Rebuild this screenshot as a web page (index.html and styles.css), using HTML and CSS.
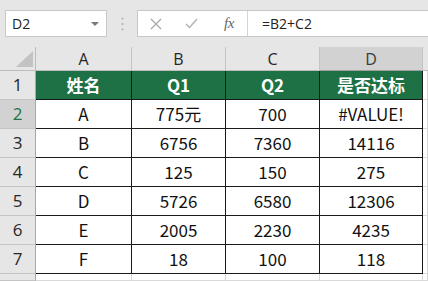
FILE: index.html
```html
<!DOCTYPE html>
<html>
<head>
<meta charset="utf-8">
<link rel="stylesheet" href="styles.css">
</head>
<body>
<div class="toolbar">
  <div class="namebox">
    <span class="name">D2</span>
    <svg class="drop" width="8" height="5" viewBox="0 0 8 5"><path d="M0 0 L8 0 L4 4 Z" fill="#7a7a7a"/></svg>
  </div>
  <div class="sep">
    <svg width="3" height="14" viewBox="0 0 3 14"><circle cx="1.5" cy="1.5" r="1.1" fill="#b0b0b0"/><circle cx="1.5" cy="7" r="1.1" fill="#b0b0b0"/><circle cx="1.5" cy="12.5" r="1.1" fill="#b0b0b0"/></svg>
  </div>
  <div class="fbar">
    <div class="ficons">
      <svg class="ic-x" width="12" height="12" viewBox="0 0 12 12"><path d="M1 1 L11 11 M11 1 L1 11" stroke="#a8a8a8" stroke-width="1.3" fill="none"/></svg>
      <svg class="ic-ok" width="13" height="11" viewBox="0 0 13 11"><path d="M1 6 L4.5 9.5 L12 1" stroke="#b4b4b4" stroke-width="1.5" fill="none"/></svg>
      <span class="fx">fx</span>
    </div>
    <div class="ftext">=B2+C2</div>
  </div>
</div>
<div class="sheet">
  <div class="corner"><svg width="17" height="16" viewBox="0 0 17 16"><path d="M17 0 L17 16 L0 16 Z" fill="#c3c3c3"/></svg></div>
  <div class="ch">A</div><div class="ch">B</div><div class="ch">C</div><div class="ch sel">D</div><div class="ch last"></div>

  <div class="rh">1</div>
  <div class="c hd">姓名</div><div class="c hd">Q1</div><div class="c hd">Q2</div><div class="c hd">是否达标</div><div class="e"></div>

  <div class="rh sel">2</div>
  <div class="c">A</div><div class="c">775元</div><div class="c">700</div><div class="c">#VALUE!</div><div class="e"></div>

  <div class="rh">3</div>
  <div class="c">B</div><div class="c">6756</div><div class="c">7360</div><div class="c">14116</div><div class="e"></div>

  <div class="rh">4</div>
  <div class="c">C</div><div class="c">125</div><div class="c">150</div><div class="c">275</div><div class="e"></div>

  <div class="rh">5</div>
  <div class="c">D</div><div class="c">5726</div><div class="c">6580</div><div class="c">12306</div><div class="e"></div>

  <div class="rh">6</div>
  <div class="c">E</div><div class="c">2005</div><div class="c">2230</div><div class="c">4235</div><div class="e"></div>

  <div class="rh">7</div>
  <div class="c">F</div><div class="c">18</div><div class="c">100</div><div class="c">118</div><div class="e"></div>

  <div class="rh"></div>
  <div class="e"></div><div class="e"></div><div class="e"></div><div class="e"></div><div class="e"></div>
</div>
</body>
</html>
```

FILE: styles.css
```css
* { box-sizing: border-box; }
html, body {
  margin: 0;
  padding: 0;
  width: 428px;
  height: 281px;
  overflow: hidden;
  background: #e6e6e6;
  font-family: "Noto Sans CJK SC", "Noto Sans", sans-serif;
  color: #1a1a1a;
}
.toolbar {
  height: 47px;
  display: flex;
  align-items: flex-start;
  padding-top: 10px;
}
.namebox {
  margin-left: 5px;
  width: 102px;
  height: 27px;
  background: #fff;
  border: 1px solid #c8c8c8;
  display: flex;
  align-items: center;
  justify-content: space-between;
  padding: 0 7px 0 6px;
}
.name {
  font-size: 14px;
  color: #222;
  font-family: "Open Sans", "Noto Sans", sans-serif;
}
.drop { margin-top: 1px; }
.sep {
  width: 30px;
  height: 27px;
  display: flex;
  align-items: center;
  justify-content: center;
}
.fbar {
  flex: 1;
  height: 27px;
  background: #fff;
  border: 1px solid #c8c8c8;
  border-right: none;
  display: flex;
}
.ficons {
  width: 110px;
  display: flex;
  align-items: center;
  padding-left: 12px;
  border-right: 1px solid #d4d4d4;
}
.ic-x { margin-right: 23px; }
.ic-ok { margin-right: 26px; }
.fx {
  font-family: "Liberation Serif", serif;
  font-style: italic;
  font-size: 15px;
  color: #666;
  letter-spacing: -0.5px;
}
.ftext {
  padding-left: 14px;
  font-size: 14px;
  line-height: 25px;
  color: #222;
  font-family: "Open Sans", "Noto Sans", sans-serif;
}
.sheet {
  display: grid;
  grid-template-columns: 36px 96px 94px 94px 103px 1fr;
  grid-template-rows: 24px repeat(7, 29px) 7px;
  background: #fff;
}
.corner {
  background: #e6e6e6;
  border-right: 1px solid #bdbdbd;
  border-bottom: 1px solid #bdbdbd;
  display: flex;
  align-items: flex-end;
  justify-content: flex-end;
  padding: 0 2px 3px 0;
}
.ch {
  background: #e6e6e6;
  border-right: 1px solid #c4c4c4;
  border-bottom: 1px solid #bdbdbd;
  font-size: 16px;
  line-height: 24px;
  text-align: center;
  color: #262626;
  font-family: "Open Sans", "Noto Sans", sans-serif;
}
.ch.sel { background: #d2d2d2; color: #3a3a3a; border-bottom: 1px solid #a0a0a0; }
.ch.last { border-right: none; }
.rh {
  background: #e6e6e6;
  border-right: 1px solid #a8a8a8;
  border-bottom: 1px solid #c4c4c4;
  font-size: 17px;
  line-height: 28px;
  text-align: center;
  color: #262626;
  font-family: "Open Sans", "Noto Sans", sans-serif;
}
.rh.sel { background: #d2d2d2; color: #217346; }
.c {
  border-right: 1px solid #1a1a1a;
  border-bottom: 1px solid #1a1a1a;
  font-size: 17px;
  line-height: 28px;
  text-align: center;
  color: #111;
}
.c.hd {
  background: #1e7145;
  color: #fff;
  font-weight: bold;
}
.e {
  border-right: 1px solid #d9d9d9;
  border-bottom: 1px solid #d9d9d9;
}
```
